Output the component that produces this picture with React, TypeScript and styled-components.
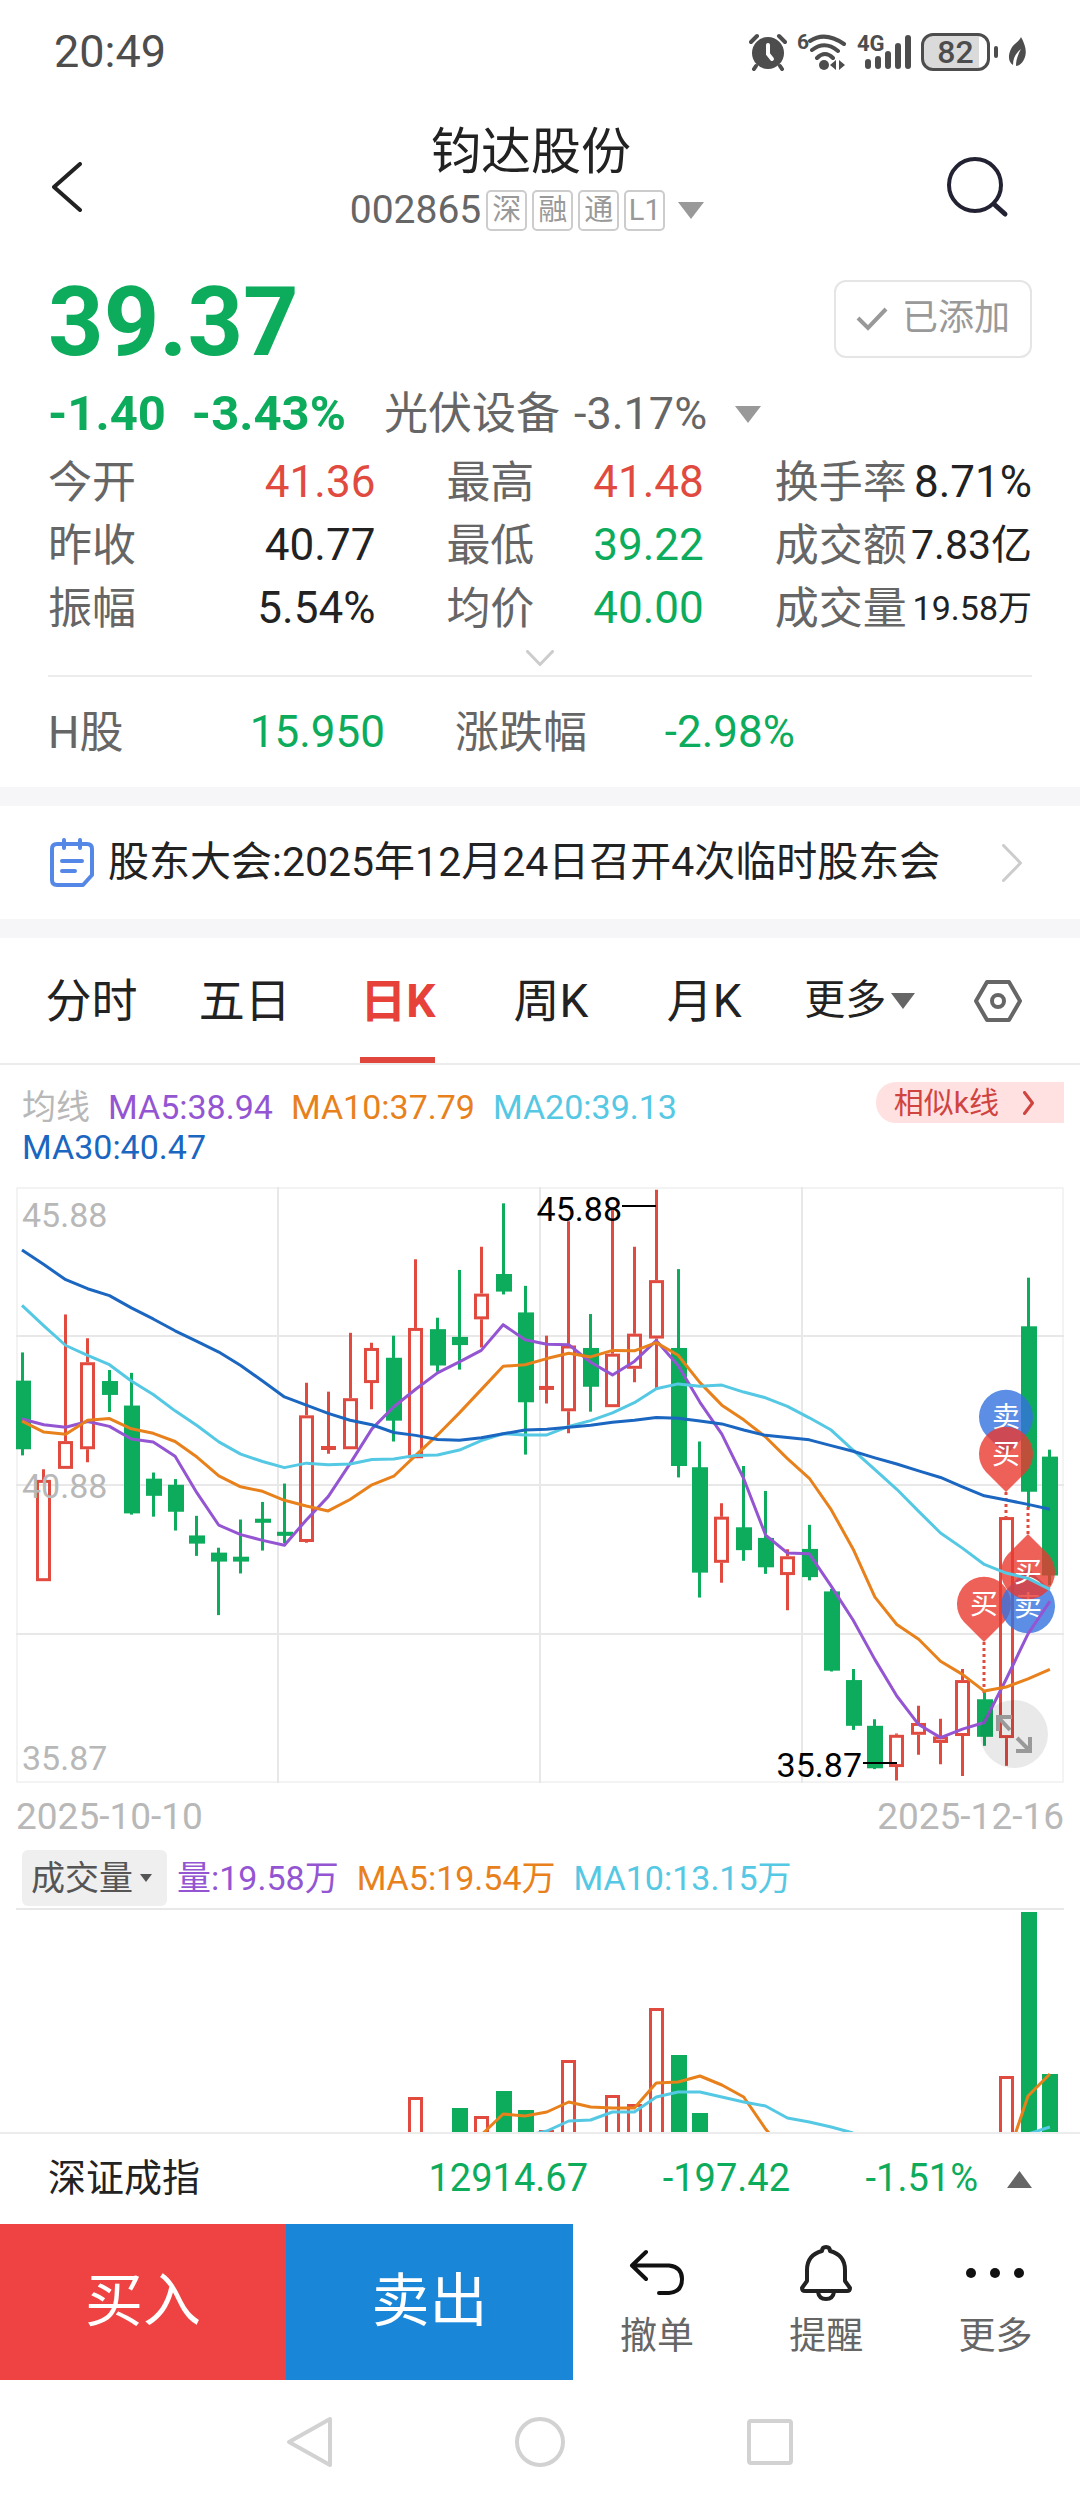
import React from "react";
import styled, { createGlobalStyle, css } from "styled-components";

const color = {
  up: "#e04a3f",
  down: "#0cac5c",
  text: "#222222",
  label: "#666666",
  muted: "#999999",
  faint: "#b8b8b8",
  line: "#ececec",
  band: "#f6f6f9",
  purple: "#9455d3",
  orange: "#e8811c",
  cyan: "#55c8e4",
  blue: "#1a66c0",
};

const GlobalStyle = createGlobalStyle`
  * { box-sizing: border-box; }
  body {
    margin: 0;
    background: #ffffff;
    color: ${color.text};
    font-family: Roboto, "Noto Sans CJK SC", sans-serif;
    line-height: 1.2;
  }
  button, select {
    margin: 0;
    padding: 0;
    border: 0;
    background: none;
    color: inherit;
    font: inherit;
  }
  svg { display: block; }
  dl, dd, dt, h1, p { margin: 0; font-weight: 400; }
`;

const Page = styled.main`
  display: flex;
  flex-direction: column;
`;

/* ---------- status bar ---------- */

const StatusBar = styled.div`
  display: flex;
  align-items: center;
  justify-content: space-between;
  height: 104px;
  padding: 0 54px;
  color: #4d4d4d;
  font-size: 45px;
`;

const StatusIcons = styled.div`
  display: flex;
  align-items: center;
  gap: 10px;
`;

const Battery = styled.span`
  display: flex;
  align-items: center;
  justify-content: center;
  width: 69px;
  height: 38px;
  border: 3px solid #4d4d4d;
  border-radius: 12px;
  background: linear-gradient(to right, #dadada 88%, #ffffff 88%);
  font-size: 32px;
  font-weight: 500;
  line-height: 32px;
`;

const BatteryGroup = styled.span`
  display: flex;
  align-items: center;
  gap: 4px;
`;

const BatteryCap = styled.span`
  width: 4px;
  height: 12px;
  border-radius: 2px;
  background: #4d4d4d;
`;

/* ---------- title ---------- */

const Header = styled.header`
  display: grid;
  grid-template-columns: 1fr auto 1fr;
  align-items: end;
  height: 136px;
  padding: 0 70px 2px 52px;
`;

const IconButton = styled.button<{ $end?: boolean }>`
  display: flex;
  align-items: center;
  justify-self: ${(p) => (p.$end ? "end" : "start")};
  height: 102px;
`;

const TitleBlock = styled.div`
  display: flex;
  flex-direction: column;
  align-items: center;
`;

const Title = styled.h1`
  font-size: 50px;
  line-height: 60px;
`;

const CodeRow = styled.div`
  display: flex;
  align-items: center;
  gap: 5px;
  height: 56px;
  color: ${color.label};
  font-size: 39px;
`;

const Tag = styled.span`
  display: flex;
  align-items: center;
  justify-content: center;
  width: 41px;
  height: 41px;
  border: 2px solid #cccccc;
  border-radius: 5px;
  color: ${color.muted};
  font-size: 29px;
  line-height: 40px;
`;

const DropMark = styled.button`
  padding: 8px;
`;

/* ---------- quote ---------- */

const Quote = styled.section`
  display: flex;
  flex-direction: column;
  padding: 40px 48px 0;
`;

const PriceRow = styled.div`
  display: flex;
  align-items: center;
  justify-content: space-between;
`;

const Price = styled.strong`
  padding-top: 6px;
  color: ${color.down};
  font-size: 97px;
  line-height: 72px;
`;

const AddedButton = styled.button`
  display: flex;
  align-items: center;
  gap: 14px;
  height: 78px;
  padding: 0 20px;
  border: 2px solid #e5e5e5;
  border-radius: 12px;
  color: ${color.muted};
  font-size: 36px;
`;

const ChangeRow = styled.div`
  display: flex;
  align-items: center;
  height: 60px;
  margin-top: 26px;
  color: ${color.label};
  font-size: 44px;
`;

const Change = styled.strong`
  margin-right: 26px;
  color: ${color.down};
  font-size: 49px;
`;

const Sector = styled.span`
  margin: 0 14px 0 12px;
`;

const SectorChange = styled.span`
  margin-right: 20px;
  font-size: 45px;
`;

const Stats = styled.dl`
  display: grid;
  grid-template-columns: 327fr 257fr 257fr;
  grid-auto-rows: 63px;
  column-gap: 71px;
  margin-top: 7px;
`;

const Stat = styled.div`
  display: flex;
  align-items: center;
  justify-content: space-between;
  white-space: nowrap;
`;

const StatLabel = styled.dt`
  padding-top: 2px;
  color: ${color.label};
  font-size: 44px;
`;

const StatValue = styled.dd<{ $tone?: "up" | "down"; $size?: number }>`
  color: ${(p) => (p.$tone ? color[p.$tone] : color.text)};
  font-size: ${(p) => p.$size ?? 44}px;
`;

const Expand = styled.button`
  display: flex;
  align-items: center;
  justify-content: center;
  height: 35px;
`;

const HShare = styled.dl`
  display: grid;
  grid-template-columns: 337fr 340fr 167fr;
  column-gap: 70px;
  height: 112px;
  border-top: 2px solid ${color.line};
`;

const Notice = styled.a`
  display: flex;
  align-items: center;
  gap: 14px;
  height: 151px;
  padding: 0 58px 0 50px;
  border: solid ${color.band};
  border-width: 19px 0;
  color: ${color.text};
  font-size: 41px;
  text-decoration: none;
  white-space: nowrap;
`;

const NoticeText = styled.span`
  flex: 1;
`;

/* ---------- tabs ---------- */

const Tabs = styled.nav`
  display: grid;
  grid-template-columns: repeat(5, 153fr) 158fr 118fr;
  height: 127px;
  padding: 0 23px 0 15px;
  border-bottom: 2px solid ${color.line};
`;

const Tab = styled.button<{ $active?: boolean; $small?: boolean }>`
  display: flex;
  align-items: center;
  justify-content: center;
  gap: 5px;
  font-size: ${(p) => (p.$small ? 41 : 46)}px;
  ${(p) =>
    p.$active &&
    css`
      color: #e64239;
      font-weight: 700;
    `}
`;

const TabText = styled.span<{ $active?: boolean }>`
  display: flex;
  align-items: center;
  height: 125px;
  padding-top: 8px;
  border-bottom: 6px solid ${(p) => (p.$active ? "#e0463c" : "transparent")};
`;

/* ---------- charts ---------- */

const Legend = styled.div`
  display: flex;
  align-items: flex-start;
  justify-content: space-between;
  padding: 17px 16px 20px 22px;
`;

const LegendItems = styled.div`
  display: flex;
  flex: 1;
  flex-wrap: wrap;
  column-gap: 18px;
  margin-right: 20px;
  padding-top: 5px;
  font-size: 34px;
  line-height: 40px;
`;

const LegendItem = styled.span<{ $color: string }>`
  color: ${(p) => p.$color};
`;

const SimilarLink = styled.a`
  display: flex;
  align-items: center;
  gap: 24px;
  height: 41px;
  padding: 0 30px 0 18px;
  border-radius: 20px 0 0 20px;
  background: #ffe1e1;
  color: #d0443f;
  font-size: 30px;
  line-height: 41px;
  text-decoration: none;
`;

const ChartArea = styled.div`
  position: relative;
  margin: 0 16px;
`;

const ChartSvg = styled.svg<{ $clip?: boolean }>`
  width: 100%;
  height: auto;
  overflow: ${(p) => (p.$clip ? "hidden" : "visible")};
`;

const ZoomButton = styled.button`
  position: absolute;
  right: 16px;
  bottom: 15px;
  display: flex;
  align-items: center;
  justify-content: center;
  width: 68px;
  height: 68px;
  border-radius: 50%;
  background: rgba(0, 0, 0, 0.085);
`;

const Dates = styled.div`
  display: flex;
  align-items: center;
  justify-content: space-between;
  height: 50px;
  margin: 9px 16px 8px;
  color: ${color.faint};
  font-size: 37px;
`;

const VolumeRow = styled.div`
  display: flex;
  align-items: center;
  gap: 18px;
  margin: 0 16px;
  padding: 0 0 2px 6px;
  border-bottom: 2px solid #e8e8e8;
  font-size: 34px;
  white-space: nowrap;
`;

const SelectBox = styled.label`
  position: relative;
  display: flex;
  align-items: center;
  margin-right: -8px;
  border-radius: 6px;
  background: #efefef;
  color: #555555;
  svg {
    position: absolute;
    right: 15px;
    pointer-events: none;
  }
`;

const Select = styled.select`
  height: 56px;
  padding: 0 34px 0 9px;
  appearance: none;
`;

/* ---------- bottom bars ---------- */

const IndexBar = styled.button`
  display: grid;
  grid-template-columns: 320fr 220fr 202fr 188fr 54fr;
  align-items: center;
  justify-items: end;
  height: 92px;
  padding: 0 48px;
  border-top: 2px solid ${color.line};
  color: ${color.down};
  font-size: 38px;
`;

const IndexName = styled.span`
  justify-self: start;
  color: ${color.text};
`;

const Actions = styled.div`
  display: grid;
  grid-template-columns: 286fr 286fr repeat(3, 169fr);
  height: 156px;
`;

const Trade = styled.button<{ $bg: string }>`
  background: ${(p) => p.$bg};
  color: #ffffff;
  font-size: 58px;
`;

const Action = styled.button`
  display: flex;
  flex-direction: column;
  align-items: center;
  justify-content: center;
  gap: 14px;
  color: ${color.label};
  font-size: 37px;
  line-height: 44px;
`;

const SystemNav = styled.nav`
  display: flex;
  align-items: center;
  justify-content: center;
  gap: 180px;
  height: 124px;
`;

/* ---------- small drawings ---------- */

const Triangle = ({ w = 26, h = 17, fill = "#999999", up = false }) => (
  <svg width={w} height={h} viewBox="0 0 26 17" preserveAspectRatio="none" aria-hidden="true">
    <path d={up ? "M0 17H26L13 0Z" : "M0 0H26L13 17Z"} fill={fill} />
  </svg>
);

const AlarmIcon = () => (
  <svg width="38" height="38" viewBox="0 0 38 38" fill="none" stroke="#4d4d4d" strokeLinecap="round">
    <circle cx="19" cy="20" r="16" fill="#4d4d4d" stroke="none" />
    <path d="M2 9 8 3M36 9 30 3M7 33 5 36M31 33 33 36" strokeWidth="4" />
    <path d="M19 12V21L23 26" stroke="#ffffff" strokeWidth="4" />
  </svg>
);

const WifiIcon = () => (
  <svg width="50" height="46" viewBox="0 -4 50 46" fill="none" stroke="#4d4d4d" strokeLinecap="round">
    <text x="0" y="16" fill="#4d4d4d" stroke="none" fontSize="21" fontWeight="700">6</text>
    <path d="M13 8Q28 -2 47 11M15 17Q28 7 41 18M20 25Q28 17 36 25" strokeWidth="4" />
    <circle cx="27" cy="32" r="5" fill="#4d4d4d" stroke="none" />
    <path d="M39 27V37L33 32ZM42 27 48 32 42 37Z" fill="#4d4d4d" stroke="none" />
  </svg>
);

const SignalIcon = () => (
  <svg width="54" height="46" viewBox="0 -4 54 46" stroke="#4d4d4d" strokeWidth="6" strokeLinecap="round">
    <text x="0" y="18" fill="#4d4d4d" stroke="none" fontSize="22" fontWeight="700">4G</text>
    <path d="M11 29V33M21 26V33M31 21V33M41 13V33M51 5V33" />
  </svg>
);

const LeafIcon = () => (
  <svg width="18" height="30" viewBox="0 0 18 30">
    <path d="M13 0C17 7 19 14 17 20C15 26 11 29 8 29C8 23 10 17 13 12C8 16 5 21 5 28C0 25 0 18 3 12C5 7 11 5 13 0Z" fill="#4d4d4d" />
  </svg>
);

const Chevron = ({ w, h, stroke, sw, dir }: { w: number; h: number; stroke: string; sw: number; dir: "left" | "right" | "down" }) => {
  const p = sw / 2;
  const d =
    dir === "left"
      ? `M${w - p} ${p}L${p} ${h / 2}L${w - p} ${h - p}`
      : dir === "right"
        ? `M${p} ${p}L${w - p} ${h / 2}L${p} ${h - p}`
        : `M${p} ${p}L${w / 2} ${h - p}L${w - p} ${p}`;
  return (
    <svg width={w} height={h} viewBox={`0 0 ${w} ${h}`} fill="none" aria-hidden="true">
      <path d={d} stroke={stroke} strokeWidth={sw} strokeLinecap="round" strokeLinejoin="round" />
    </svg>
  );
};

/* ---------- chart data ---------- */

/* high, body top, body bottom, low as depth below the chart's upper edge, then direction */
type Candle = [number, number, number, number, "r" | "g"];

const SPAN = 1459;
const W = 1048;
const H = 596;
const STEP = 21.87;

const candles: Candle[] = [
  [405, 474, 642, 657, "g"], [691, 717, 965, 965, "r"], [312, 622, 690, 690, "r"], [370, 429, 642, 674, "r"],
  [448, 475, 509, 551, "g"], [455, 535, 799, 802, "g"], [699, 714, 756, 807, "g"], [715, 729, 795, 841, "g"],
  [805, 853, 873, 903, "g"], [883, 895, 917, 1048, "g"], [814, 905, 917, 946, "g"], [771, 812, 822, 890, "g"],
  [726, 844, 854, 872, "g"], [479, 559, 869, 871, "r"], [501, 634, 644, 653, "r"], [357, 517, 642, 642, "r"],
  [381, 394, 480, 544, "r"], [364, 418, 572, 623, "g"], [177, 345, 664, 664, "r"], [320, 348, 437, 452, "g"],
  [203, 367, 387, 447, "g"], [146, 261, 324, 393, "r"], [40, 213, 256, 263, "g"], [242, 307, 527, 655, "g"],
  [364, 487, 497, 530, "r"], [84, 388, 549, 603, "r"], [311, 394, 489, 550, "g"], [55, 408, 539, 539, "r"],
  [146, 359, 445, 478, "r"], [7, 228, 371, 494, "r"], [201, 394, 683, 711, "g"], [623, 686, 944, 1005, "g"],
  [774, 807, 920, 969, "r"], [683, 833, 889, 915, "g"], [744, 859, 931, 947, "g"], [887, 904, 950, 1036, "r"],
  [827, 886, 955, 963, "g"], [984, 990, 1184, 1186, "g"], [1180, 1207, 1319, 1329, "g"], [1303, 1319, 1423, 1425, "g"],
  [1338, 1341, 1420, 1453, "r"], [1270, 1312, 1341, 1390, "r"], [1302, 1345, 1361, 1413, "r"], [1180, 1207, 1344, 1442, "r"],
  [1237, 1254, 1346, 1368, "g"], [808, 808, 1349, 1417, "r"], [222, 341, 746, 785, "g"], [643, 660, 951, 975, "g"],
];

const ma30 = [154, 190, 227, 249, 266, 296, 323, 352, 378, 404, 437, 475, 514, 534, 554, 571, 582, 601, 608, 618, 620, 614, 604, 595, 593, 588, 583, 576, 571, 564, 566, 573, 580, 595, 608, 613, 619, 633, 647, 663, 678, 695, 711, 734, 756, 766, 777, 789];
const ma20 = [290, 340, 388, 412, 435, 475, 508, 548, 584, 624, 654, 672, 687, 676, 680, 678, 667, 666, 657, 656, 644, 621, 604, 607, 607, 586, 572, 553, 528, 494, 482, 488, 485, 502, 516, 537, 565, 595, 644, 692, 740, 794, 847, 884, 924, 945, 958, 985];
const ma10 = [573, 600, 605, 571, 567, 592, 603, 623, 661, 707, 734, 745, 767, 781, 793, 765, 729, 708, 657, 607, 553, 496, 439, 435, 420, 407, 416, 400, 401, 381, 412, 479, 534, 570, 612, 665, 713, 790, 886, 1004, 1071, 1107, 1161, 1193, 1234, 1224, 1204, 1181];
const ma5 = [568, 582, 588, 574, 586, 617, 624, 659, 749, 828, 851, 865, 877, 815, 758, 677, 592, 538, 495, 455, 428, 400, 337, 374, 385, 386, 429, 460, 427, 376, 437, 527, 605, 714, 852, 896, 898, 977, 1060, 1157, 1246, 1316, 1348, 1327, 1311, 1205, 1094, 1014];

const cx = (i: number) => 6 + i * STEP;
/* half-pixel centre keeps the odd-width wicks crisp */
const barX = (i: number) => Math.floor(cx(i)) + 0.5;
const cy = (v: number) => (v * H) / SPAN;
const points = (vals: number[]) => vals.map((v, i) => `${cx(i)},${cy(v)}`).join(" ");

const PriceCandle = ({ c, i }: { c: Candle; i: number }) => {
  const [hi, top, bottom, lo, dir] = c;
  const x = barX(i);
  const left = Math.max(x - 7.5, 0);
  if (dir === "g") {
    return (
      <g fill={color.down}>
        <rect x={x - 1.5} y={cy(hi)} width="3" height={cy(lo - hi)} />
        <rect x={left} y={cy(top)} width={x + 8.5 - left} height={Math.max(cy(bottom - top), 4)} />
      </g>
    );
  }
  if (bottom - top < 12) {
    return (
      <g fill={color.up}>
        <rect x={x - 1.5} y={cy(hi)} width="3" height={cy(lo - hi)} />
        <rect x={x - 7.5} y={cy(top)} width="15" height="4" />
      </g>
    );
  }
  return (
    <g stroke={color.up} strokeWidth="3" fill="none">
      <path d={`M${x} ${cy(hi)}V${cy(top)}M${x} ${cy(bottom)}V${cy(lo)}`} />
      <rect x={x - 6} y={cy(top) + 1.5} width="12" height={cy(bottom - top) - 3} />
    </g>
  );
};

const Pin = ({ x, y, kind, up = false }: { x: number; y: number; kind: "买" | "卖"; up?: boolean }) => (
  <g>
    <path
      d={
        up
          ? `M${x} ${y - 38}L${x + 20} ${y - 18}A27 27 0 1 1 ${x - 20} ${y - 18}Z`
          : `M${x} ${y + 38}L${x + 20} ${y + 18}A27 27 0 1 0 ${x - 20} ${y + 18}Z`
      }
      fill={kind === "买" ? "rgba(234, 58, 48, 0.8)" : "rgba(52, 114, 222, 0.8)"}
    />
    <text x={x} y={y + 10} fill="#ffffff" fontSize="28" textAnchor="middle">
      {kind}
    </text>
  </g>
);

const PriceChart = () => (
  <ChartSvg viewBox={`0 0 ${W} ${H}`} role="img" aria-label="日K">
    <g stroke="#e8e8e8" fill="none">
      <path d={`M0 149H${W}M0 298H${W}M0 447H${W}M262 0V${H}M524 0V${H}M786 0V${H}`} strokeWidth="2" />
      <rect x="1" y="1" width={W - 2} height={H - 2} strokeWidth="1" />
    </g>
    {candles.map((c, i) => (
      <PriceCandle key={i} c={c} i={i} />
    ))}
    <g stroke={color.up} strokeWidth="3" strokeDasharray="3 3">
      <path d="M968 455V506M990 305V330M1012 320V350" />
    </g>
    <Pin x={968} y={417} kind="买" />
    <Pin x={990} y={230} kind="卖" />
    <Pin x={990} y={267} kind="买" />
    <Pin x={1012} y={419} kind="卖" up />
    <Pin x={1012} y={385} kind="买" up />
    <g fill="none" strokeWidth="3" strokeLinejoin="round">
      <polyline points={points(ma5)} stroke={color.purple} />
      <polyline points={points(ma10)} stroke={color.orange} />
      <polyline points={points(ma20)} stroke={color.cyan} />
      <polyline points={points(ma30)} stroke={color.blue} />
    </g>
    <g fill={color.faint} fontSize="34">
      <text x="6" y="40">45.88</text>
      <text x="6" y="311">40.88</text>
      <text x="6" y="583">35.87</text>
    </g>
    <g fill="#000000" fontSize="34">
      <text x="606" y="34" textAnchor="end">45.88</text>
      <text x="846" y="590" textAnchor="end">35.87</text>
    </g>
    <path d="M606 19H640M847 576H881" stroke="#000000" strokeWidth="2" />
  </ChartSvg>
);

const volumes: [number, number, "r" | "g"][] = [
  [18, 187, "r"], [20, 198, "g"], [21, 206, "r"], [22, 181, "g"], [23, 200, "g"], [24, 220, "r"], [25, 150, "r"],
  [27, 185, "r"], [28, 194, "r"], [29, 98, "r"], [30, 145, "g"], [31, 203, "g"], [45, 166, "r"], [46, 2, "g"], [47, 164, "g"],
];
const line = (pts: [number, number][]) => pts.map(([i, y]) => `${cx(i)},${y}`).join(" ");

const VolumeChart = () => (
  <ChartSvg $clip viewBox={`0 0 ${W} 222`} role="img" aria-label="成交量">
    {volumes.map(([i, top, dir]) =>
      dir === "g" ? (
        <rect key={i} x={barX(i) - 7.5} y={top} width="16" height={222 - top} fill={color.down} />
      ) : (
        <rect key={i} x={barX(i) - 6} y={top + 1.5} width="12" height={240 - top} fill="none" stroke={color.up} strokeWidth="3" />
      ),
    )}
    <g fill="none" strokeWidth="3" strokeLinejoin="round">
      <polyline
        stroke={color.orange}
        points={line([[20, 250], [21, 225], [22, 204], [23, 206], [24, 202], [25, 192], [26, 197], [27, 198], [28, 198], [29, 173], [30, 172], [31, 166], [32, 175], [33, 187], [34, 219], [35, 245]])}
      />
      <polyline stroke={color.orange} points={line([[45, 251], [46, 186], [47, 164]])} />
      <polyline
        stroke={color.cyan}
        points={line([[23, 226], [24, 221], [25, 211], [26, 210], [27, 202], [28, 202], [29, 187], [30, 182], [31, 182], [32, 187], [33, 192], [34, 196], [35, 208], [36, 212], [37, 217], [38, 223]])}
      />
      <polyline stroke={color.cyan} points={line([[46, 224], [47, 217]])} />
    </g>
  </ChartSvg>
);

/* ---------- page ---------- */

const stats: { label: string; value: string; tone?: "up" | "down"; size?: number }[] = [
  { label: "今开", value: "41.36", tone: "up" },
  { label: "最高", value: "41.48", tone: "up" },
  { label: "换手率", value: "8.71%" },
  { label: "昨收", value: "40.77" },
  { label: "最低", value: "39.22", tone: "down" },
  { label: "成交额", value: "7.83亿", size: 41 },
  { label: "振幅", value: "5.54%" },
  { label: "均价", value: "40.00", tone: "down" },
  { label: "成交量", value: "19.58万", size: 34 },
];

const periods = ["分时", "五日", "日K", "周K", "月K"];

export default function App() {
  return (
    <Page>
      <GlobalStyle />
      <StatusBar>
        <span>20:49</span>
        <StatusIcons>
          <AlarmIcon />
          <WifiIcon />
          <SignalIcon />
          <BatteryGroup>
            <Battery>82</Battery>
            <BatteryCap />
          </BatteryGroup>
          <LeafIcon />
        </StatusIcons>
      </StatusBar>

      <Header>
        <IconButton aria-label="返回">
          <Chevron w={30} h={50} stroke="#222222" sw={4} dir="left" />
        </IconButton>
        <TitleBlock>
          <Title>钧达股份</Title>
          <CodeRow>
            <span>002865</span>
            {["深", "融", "通", "L1"].map((t) => (
              <Tag key={t}>{t}</Tag>
            ))}
            <DropMark aria-label="切换">
              <Triangle />
            </DropMark>
          </CodeRow>
        </TitleBlock>
        <IconButton $end aria-label="搜索">
          <svg width="64" height="62" viewBox="0 0 64 62" fill="none" stroke="#222233" strokeWidth="4" strokeLinecap="round">
            <circle cx="29" cy="29" r="26" />
            <path d="M49 49 59 58" strokeWidth="5" />
          </svg>
        </IconButton>
      </Header>

      <Quote>
        <PriceRow>
          <Price>39.37</Price>
          <AddedButton>
            <svg width="32" height="26" viewBox="0 0 32 26" fill="none" stroke="#999999" strokeWidth="4">
              <path d="M2 12 12 22 30 3" />
            </svg>
            已添加
          </AddedButton>
        </PriceRow>
        <ChangeRow>
          <Change>-1.40</Change>
          <Change>-3.43%</Change>
          <Sector>光伏设备</Sector>
          <SectorChange>-3.17%</SectorChange>
          <DropMark aria-label="板块">
            <Triangle />
          </DropMark>
        </ChangeRow>
        <Stats>
          {stats.map((s) => (
            <Stat key={s.label}>
              <StatLabel>{s.label}</StatLabel>
              <StatValue $tone={s.tone} $size={s.size}>
                {s.value}
              </StatValue>
            </Stat>
          ))}
        </Stats>
        <Expand aria-label="展开">
          <Chevron w={28} h={16} stroke="#cccccc" sw={3} dir="down" />
        </Expand>
        <HShare>
          <Stat>
            <StatLabel>H股</StatLabel>
            <StatValue $tone="down">15.950</StatValue>
          </Stat>
          <Stat>
            <StatLabel>涨跌幅</StatLabel>
            <StatValue $tone="down">-2.98%</StatValue>
          </Stat>
        </HShare>
      </Quote>

      <Notice href="#notice">
        <svg width="44" height="50" viewBox="0 0 44 50" fill="none" stroke="#5588e6" strokeWidth="4" strokeLinecap="round" strokeLinejoin="round">
          <path d="M7 6H37Q42 6 42 11V37L33 47H7Q2 47 2 42V11Q2 6 7 6ZM14 2V10M30 2V10M12 23H32M12 33H25" />
        </svg>
        <NoticeText>股东大会:2025年12月24日召开4次临时股东会</NoticeText>
        <Chevron w={20} h={38} stroke="#cccccc" sw={3} dir="right" />
      </Notice>

      <Tabs>
        {periods.map((p) => (
          <Tab key={p} $active={p === "日K"}>
            <TabText $active={p === "日K"}>{p}</TabText>
          </Tab>
        ))}
        <Tab $small>
          更多
          <Triangle w={24} h={16} fill="#666666" />
        </Tab>
        <Tab aria-label="设置">
          <svg width="48" height="42" viewBox="0 0 48 42" fill="none" stroke="#666666" strokeWidth="4" strokeLinejoin="round">
            <path d="M13 2H35L46 21L35 40H13L2 21Z" />
            <circle cx="24" cy="21" r="6" />
          </svg>
        </Tab>
      </Tabs>

      <Legend>
        <LegendItems>
          <LegendItem $color={color.faint}>均线</LegendItem>
          <LegendItem $color={color.purple}>MA5:38.94</LegendItem>
          <LegendItem $color={color.orange}>MA10:37.79</LegendItem>
          <LegendItem $color={color.cyan}>MA20:39.13</LegendItem>
          <LegendItem $color={color.blue}>MA30:40.47</LegendItem>
        </LegendItems>
        <SimilarLink href="#similar">
          相似k线
          <Chevron w={11} h={24} stroke="#d0443f" sw={3} dir="right" />
        </SimilarLink>
      </Legend>

      <ChartArea>
        <PriceChart />
        <ZoomButton aria-label="全屏">
          <svg width="36" height="38" viewBox="0 0 36 38" fill="none" stroke="#999999" strokeWidth="4">
            <path d="M2 16V2H16M2 2 14 15M34 22V36H20M34 36 21 23" />
          </svg>
        </ZoomButton>
      </ChartArea>

      <Dates>
        <span>2025-10-10</span>
        <span>2025-12-16</span>
      </Dates>

      <VolumeRow>
        <SelectBox>
          <Select aria-label="指标" defaultValue="成交量">
            <option>成交量</option>
          </Select>
          <Triangle w={12} h={8} fill="#555555" />
        </SelectBox>
        <LegendItem $color={color.purple}>量:19.58万</LegendItem>
        <LegendItem $color={color.orange}>MA5:19.54万</LegendItem>
        <LegendItem $color={color.cyan}>MA10:13.15万</LegendItem>
      </VolumeRow>
      <ChartArea>
        <VolumeChart />
      </ChartArea>

      <IndexBar>
        <IndexName>深证成指</IndexName>
        <span>12914.67</span>
        <span>-197.42</span>
        <span>-1.51%</span>
        <Triangle w={25} fill="#666666" up />
      </IndexBar>

      <Actions>
        <Trade $bg="#ee4342">买入</Trade>
        <Trade $bg="#1a86d8">卖出</Trade>
        <Action>
          <svg width="56" height="56" viewBox="0 0 56 56" fill="none" stroke="#111111" strokeWidth="4" strokeLinecap="round" strokeLinejoin="round">
            <path d="M17 7 3 20.500L17 34M4 20.500H40Q53 22 53 34Q53 47 40 48H30" />
          </svg>
          撤单
        </Action>
        <Action>
          <svg width="52" height="56" viewBox="0 0 52 56" fill="none" stroke="#222222" strokeWidth="4" strokeLinejoin="round">
            <path d="M22 6Q22 2 26 2Q30 2 30 6Q45 10 45 25V36L50 43Q50 46 47 46H5Q2 46 2 43L7 36V25Q7 10 22 6ZM18 47Q19 54 26 54Q33 54 34 47" />
          </svg>
          提醒
        </Action>
        <Action>
          <svg width="58" height="56" viewBox="0 0 58 56" fill="#111111">
            <circle cx="5" cy="28" r="5" />
            <circle cx="29" cy="28" r="5" />
            <circle cx="53" cy="28" r="5" />
          </svg>
          更多
        </Action>
      </Actions>

      <SystemNav aria-label="系统导航">
        <button aria-label="后退">
          <svg width="48" height="52" viewBox="0 0 48 52" fill="none" stroke="#d2d2d2" strokeWidth="4" strokeLinejoin="round">
            <path d="M44 3V49L3 26Z" />
          </svg>
        </button>
        <button aria-label="主页">
          <svg width="52" height="52" viewBox="0 0 52 52" fill="none" stroke="#d2d2d2" strokeWidth="4">
            <circle cx="26" cy="26" r="23" />
          </svg>
        </button>
        <button aria-label="最近">
          <svg width="48" height="52" viewBox="0 0 48 52" fill="none" stroke="#d2d2d2" strokeWidth="4">
            <rect x="3" y="5" width="42" height="42" rx="2" />
          </svg>
        </button>
      </SystemNav>
    </Page>
  );
}
